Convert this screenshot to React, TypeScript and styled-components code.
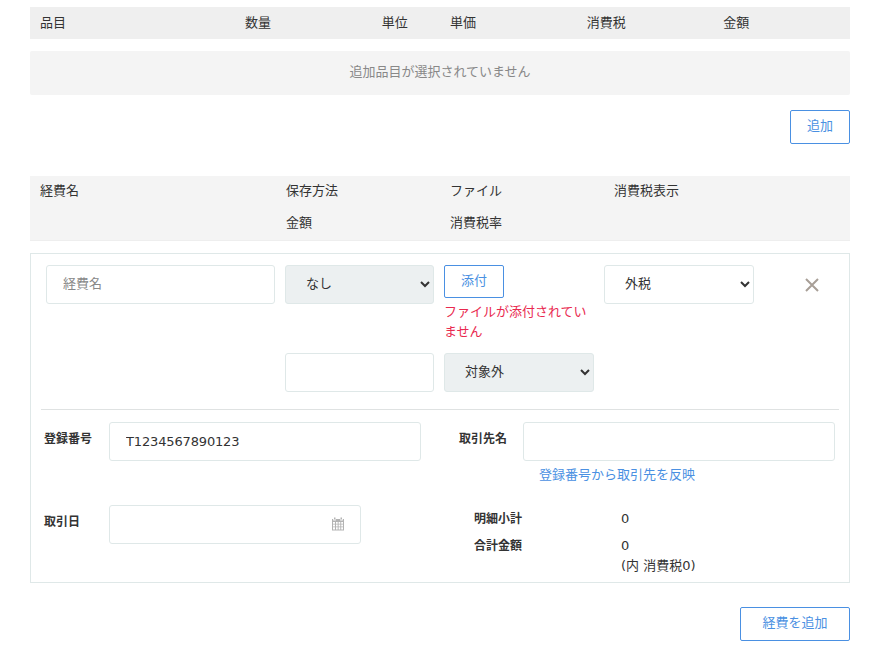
import React from 'react';
import styled, { createGlobalStyle } from 'styled-components';

const GlobalStyle = createGlobalStyle`
  body {
    margin: 0;
    background: #fff;
    color: #333;
    font-family: "DejaVu Sans", "Noto Sans CJK JP", sans-serif;
    font-size: 13px;
    line-height: 20px;
  }
`;

const itemColumns = ['品目', '数量', '単位', '単価', '消費税', '金額'];

const App = () => (
  <>
    <GlobalStyle />
    <Page>
      <ItemHead>
        {itemColumns.map(name => (
          <ItemHeadCell key={name}>{name}</ItemHeadCell>
        ))}
      </ItemHead>
      <EmptyBox>追加品目が選択されていません</EmptyBox>
      <ButtonRow>
        <OutlineButton $width={60} $height={34}>追加</OutlineButton>
      </ButtonRow>

      <ExpenseHead>
        <HeadCell>経費名</HeadCell>
        <HeadCell>保存方法</HeadCell>
        <HeadCell>ファイル</HeadCell>
        <HeadCell>消費税表示</HeadCell>
        <HeadCell />
        <HeadCell>金額</HeadCell>
        <HeadCell>消費税率</HeadCell>
      </ExpenseHead>

      <Card>
        <ExpenseGrid>
          <NameInput placeholder="経費名" />
          <Select $filled defaultValue="none">
            <option value="none">なし</option>
          </Select>
          <FileCell>
            <OutlineButton $width={60} $height={33}>添付</OutlineButton>
            <ErrorText>ファイルが添付されていません</ErrorText>
          </FileCell>
          <Select defaultValue="outer">
            <option value="outer">外税</option>
          </Select>
          <CloseButton aria-label="削除">
            <svg width="16" height="16" viewBox="0 0 16 16" fill="none" stroke="#a89f97" strokeWidth="2">
              <path d="M2 2 L14 14 M14 2 L2 14" />
            </svg>
          </CloseButton>
          <span />
          <TextInput />
          <Select $filled defaultValue="exempt">
            <option value="exempt">対象外</option>
          </Select>
        </ExpenseGrid>

        <Divider />

        <DetailGrid>
          <Field>
            <FieldLabel>登録番号</FieldLabel>
            <NumberInput defaultValue="T1234567890123" />
          </Field>
          <Field $right>
            <FieldLabel>取引先名</FieldLabel>
            <FieldBody>
              <TextInput />
              <LinkText>登録番号から取引先を反映</LinkText>
            </FieldBody>
          </Field>
          <Field>
            <FieldLabel>取引日</FieldLabel>
            <DateWrap>
              <TextInput />
              <CalendarIcon width="14" height="14" viewBox="0 0 14 14">
                <path
                  fill="#b3b3b3"
                  d="M3 0.5h1.5v2H3zM9.5 0.5H11v2H9.5zM1 2h1.2v1.4h2.6V2h4.4v1.4h2.6V2H13v11.5H1zM2 5v1.7h2V5zM5 5v1.7h1.7V5zM7.6 5v1.7h1.7V5zM10.2 5v1.7H12V5zM2 7.5v1.9h2V7.5zM5 7.5v1.9h1.7V7.5zM7.6 7.5v1.9h1.7V7.5zM10.2 7.5v1.9H12V7.5zM2 10.2v2.2h2v-2.2zM5 10.2v2.2h1.7v-2.2zM7.6 10.2v2.2h1.7v-2.2zM10.2 10.2v2.2H12v-2.2z"
                  fillRule="evenodd"
                />
              </CalendarIcon>
            </DateWrap>
          </Field>
          <Summary>
            <SummaryLabel>明細小計</SummaryLabel>
            <SummaryValue>0</SummaryValue>
            <SummaryLabel>合計金額</SummaryLabel>
            <SummaryValue>
              0
              <br />
              (内 消費税0)
            </SummaryValue>
          </Summary>
        </DetailGrid>
      </Card>

      <FooterRow>
        <OutlineButton $width={110} $height={34}>経費を追加</OutlineButton>
      </FooterRow>
    </Page>
  </>
);

export default App;

const Page = styled.div`
  width: 820px;
  padding: 7px 26px 15px 30px;
`;

const ItemHead = styled.div`
  display: grid;
  grid-template-columns: 3fr 2fr 1fr 2fr 2fr 2fr;
  height: 32px;
  align-items: center;
  background: #efefef;
`;

const ItemHeadCell = styled.div`
  padding-left: 10px;
`;

const EmptyBox = styled.div`
  margin-top: 12px;
  height: 44px;
  box-sizing: border-box;
  padding-bottom: 2px;
  display: flex;
  align-items: center;
  justify-content: center;
  background: #f4f4f4;
  border-radius: 2px;
  color: #888;
`;

const ButtonRow = styled.div`
  display: flex;
  justify-content: flex-end;
  margin-top: 15px;
`;

const FooterRow = styled(ButtonRow)`
  margin-top: 24px;
`;

const OutlineButton = styled.button<{ $width: number; $height: number }>`
  width: ${p => p.$width}px;
  height: ${p => p.$height}px;
  padding: 0 0 2px;
  background: #fff;
  border: 1px solid #4a90e2;
  border-radius: 2px;
  color: #4a90e2;
  font: inherit;
`;

const ExpenseHead = styled.div`
  margin-top: 32px;
  display: grid;
  grid-template-columns: 3fr 2fr 2fr 3fr;
  row-gap: 12px;
  padding: 5px 0 7px;
  background: #f4f4f4;
  border-bottom: 1px solid #eee;
`;

const HeadCell = styled.div`
  padding-left: 10px;
  min-height: 20px;
`;

const Card = styled.div`
  margin-top: 12px;
  height: 330px;
  box-sizing: border-box;
  padding: 11px 10px 0;
  border: 1px solid #dfe8e8;
`;

const ExpenseGrid = styled.div`
  display: grid;
  grid-template-columns: 229px 149px 150px 150px 1fr;
  column-gap: 10px;
  row-gap: 11px;
  align-items: start;
  padding-left: 5px;
`;

const TextInput = styled.input`
  display: block;
  box-sizing: border-box;
  width: 100%;
  height: 39px;
  padding: 0 16px;
  background: #fff;
  border: 1px solid #dfe8e8;
  border-radius: 3px;
  color: #333;
  font: inherit;
  outline: none;

  &::placeholder {
    color: #888;
    opacity: 1;
  }
`;

const NameInput = styled(TextInput)`
  padding-bottom: 2px;
`;

const NumberInput = styled(TextInput)`
  letter-spacing: -0.15px;
`;

const Select = styled.select<{ $filled?: boolean }>`
  display: block;
  box-sizing: border-box;
  width: 100%;
  height: 39px;
  padding: 0 16px 2px;
  background: ${p => (p.$filled ? '#ecf0f1' : '#fff')};
  border: 1px solid #dfe8e8;
  border-radius: 3px;
  color: #333;
  font: inherit;
  outline: none;
`;

const FileCell = styled.div`
  min-width: 0;
`;

const ErrorText = styled.div`
  margin-top: 4px;
  color: #e9294f;
`;

const CloseButton = styled.button`
  display: flex;
  align-items: center;
  justify-content: center;
  height: 39px;
  width: 96px;
  padding: 0;
  background: none;
  border: none;
`;

const Divider = styled.hr`
  margin: 17px 0 12px;
  border: none;
  border-top: 1px solid #dfe2e2;
`;

const DetailGrid = styled.div`
  display: grid;
  grid-template-columns: 377px 376px;
  column-gap: 38px;
  row-gap: 20px;
  padding-left: 3px;
`;

const Field = styled.div<{ $right?: boolean }>`
  display: grid;
  grid-template-columns: ${p => (p.$right ? '64px' : '65px')} 1fr;
  align-items: start;
`;

const FieldLabel = styled.label`
  padding-top: 7px;
  font-size: 12px;
  font-weight: 700;
`;

const FieldBody = styled.div`
  display: flex;
  flex-direction: column;
`;

const LinkText = styled.a`
  margin-top: 4px;
  padding-left: 16px;
  color: #4a90e2;
`;

const DateWrap = styled.div`
  position: relative;
  width: 252px;
`;

const CalendarIcon = styled.svg`
  position: absolute;
  top: 12px;
  right: 16px;
`;

const Summary = styled.div`
  display: grid;
  grid-template-columns: 147px 1fr;
  row-gap: 7px;
  padding: 4px 0 0 15px;
`;

const SummaryLabel = styled.div`
  font-size: 12px;
  font-weight: 700;
`;

const SummaryValue = styled.div``;
